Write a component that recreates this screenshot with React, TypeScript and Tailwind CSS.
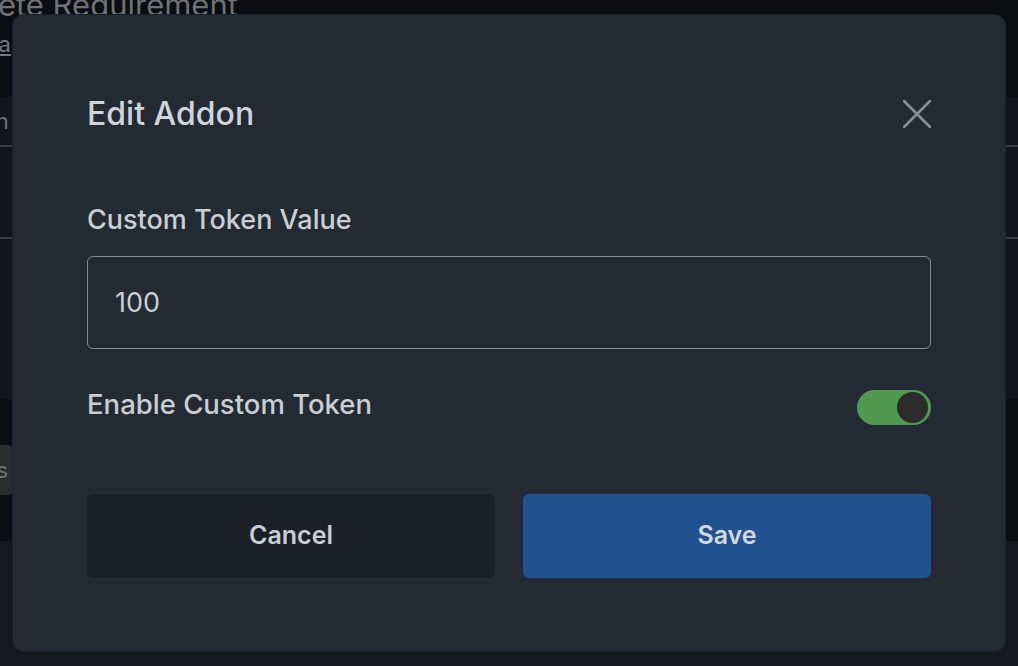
import { useState } from "react"

function CloseIcon() {
  return (
    <svg width="28" height="28" viewBox="0 0 28 28" fill="none">
      <path d="M1 1L27 27M27 1L1 27" stroke="#8b8e92" strokeWidth="2.6" strokeLinecap="round" />
    </svg>
  )
}

function Toggle({ on, onChange }: { on: boolean; onChange: () => void }) {
  return (
    <button
      type="button"
      onClick={onChange}
      className={
        "mt-[2px] flex h-[35px] w-[74px] shrink-0 items-center rounded-full px-[3px] " +
        (on ? "justify-end bg-[#4f9a4f]" : "justify-start bg-[#4a4f57]")
      }
    >
      <span className="h-[31px] w-[31px] rounded-full bg-[#2c2c2c]" />
    </button>
  )
}

function BackgroundPage() {
  return (
    <div className="flex h-screen w-full flex-col overflow-hidden bg-[#15181c]">
      <div className="h-[97px] shrink-0 bg-[#0b0d10]">
        <div className="-ml-[97px] -mt-[12px] whitespace-nowrap text-[31px] leading-[34px] text-[#6e7175]">Complete Requirement</div>
        <div className="mt-[10px] -ml-[37px] text-[22px] leading-[24px] text-[#777a7e] underline">Data</div>
      </div>
      <div className="flex h-[50px] shrink-0 items-center border-b-2 border-[#3b3d40] bg-[#12151a] -ml-[36px] text-[22px] text-[#6e7175]">
        Plan
      </div>
      <div className="h-[92px] shrink-0 border-b-2 border-[#3b3d40] bg-[#12151a]" />
      <div className="h-[160px] shrink-0 bg-[#12151a]" />
      <div className="flex h-[142px] shrink-0 items-center bg-[#0c0f12]">
        <div className="-ml-[40px] flex h-[50px] w-[52px] items-center justify-end rounded bg-[#2a2b2d] pr-[4px] text-[22px] text-[#6e7175]">
          s
        </div>
      </div>
      <div className="flex-1 bg-[#15181c]" />
    </div>
  )
}

export default function App() {
  const [enabled, setEnabled] = useState(true)
  const [value, setValue] = useState("100")

  return (
    <div className="relative h-screen w-full overflow-hidden" style={{ fontFamily: "Inter, 'Noto Sans', sans-serif" }}>
      <BackgroundPage />

      <div className="fixed inset-0 flex items-center justify-center">
        <div className="flex h-[638px] w-[994px] flex-col rounded-[12px] border border-[#1d2229] bg-[#242a33] pl-[74px] pr-[74px] pt-[71px] pb-[73px]">
          <div className="flex h-14 items-center justify-between">
            <h2 className="text-[32px] font-medium leading-[40px] text-[#cfd4dc]">Edit Addon</h2>
            <button type="button" className="flex h-[28px] w-[28px] items-center justify-center">
              <CloseIcon />
            </button>
          </div>

          <label className="mt-[62px] text-[27px] font-medium leading-[32px] text-[#c9ced6]">Custom Token Value</label>

          <input
            value={value}
            onChange={(e) => setValue(e.target.value)}
            className="mt-[20px] h-[93px] w-full rounded-[6px] border-[1.5px] border-[#878b90] bg-transparent px-[27px] text-[27px] text-[#c9ced6] outline-none"
          />

          <div className="mt-[39px] flex items-start justify-between">
            <span className="text-[27.5px] font-medium leading-[32px] text-[#c9ced6]">Enable Custom Token</span>
            <Toggle on={enabled} onChange={() => setEnabled(!enabled)} />
          </div>

          <div className="mt-[69px] grid grid-cols-2 gap-[28px]">
            <button
              type="button"
              className="h-[84px] rounded-[6px] bg-[#1b1f26] text-[25px] font-semibold text-[#c8cdd5]"
            >
              Cancel
            </button>
            <button
              type="button"
              className="h-[84px] rounded-[6px] bg-[#21518e] text-[25px] font-semibold text-[#d2d8e0]"
            >
              Save
            </button>
          </div>
        </div>
      </div>
    </div>
  )
}
